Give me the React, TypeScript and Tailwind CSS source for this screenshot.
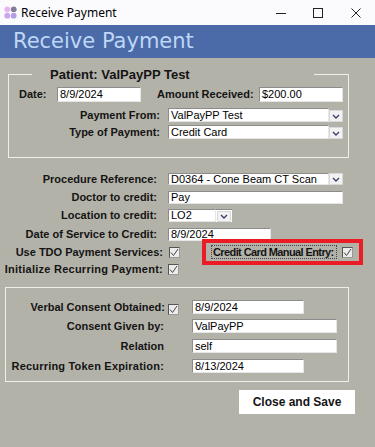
import React from "react";

const FONT = { fontFamily: '"Liberation Sans", Arial, sans-serif' };

function TextBox({ w, h = 14, value }: { w: number; h?: number; value: string }) {
  return (
    <div
      className="bg-white border-t border-l border-[#8c8c8c] border-b border-r border-b-[#e6e6e6] border-r-[#e6e6e6] flex items-center pl-[2px] text-[11px] text-black leading-none overflow-hidden whitespace-nowrap"
      style={{ width: w, height: h }}
    >
      {value}
    </div>
  );
}

function Chevron() {
  return (
    <svg width="8" height="5" viewBox="0 0 8 5">
      <path d="M1 1 L4 4 L7 1" fill="none" stroke="#3f3f6f" strokeWidth="1.4" />
    </svg>
  );
}

function DropBtn({ w = 14, h = 12 }: { w?: number; h?: number }) {
  return (
    <div
      className="bg-[#f2f2f2] border border-[#d8d8d8] flex items-end justify-center pb-[2px]"
      style={{ width: w, height: h }}
    >
      <Chevron />
    </div>
  );
}

function Check() {
  return (
    <div className="w-[11px] h-[11px] bg-[#ececec] border border-[#555] border-b-[#9a9a9a] border-r-[#9a9a9a] flex items-center justify-center">
      <svg width="9" height="9" viewBox="0 0 9 9">
        <path d="M1 4.5 L3.5 7.5 L8 1" fill="none" stroke="#444" strokeWidth="1" />
      </svg>
    </div>
  );
}

function Label({
  w,
  children,
  right = true,
  extra = "",
}: {
  w: number;
  children: React.ReactNode;
  right?: boolean;
  extra?: string;
}) {
  return (
    <div
      className={
        "text-[11px] font-bold text-[#141414] leading-none whitespace-nowrap " +
        (right ? "text-right " : "text-left ") +
        extra
      }
      style={{ width: w }}
    >
      {children}
    </div>
  );
}

export default function App() {
  return (
    <div className="w-[375px] h-[447px] bg-[#b3b2a9] flex flex-col overflow-hidden" style={FONT}>
      {/* Title bar */}
      <div className="h-[25px] bg-[#fbfbfe] flex items-center shrink-0">
        <svg className="ml-[4px]" width="13" height="13" viewBox="0 0 13 13">
          <circle cx="3.3" cy="3.3" r="2.9" fill="#e6b4f0" />
          <circle cx="9.7" cy="3.3" r="2.9" fill="#857c98" />
          <circle cx="3.3" cy="9.7" r="2.9" fill="#c7a6f4" />
          <circle cx="9.7" cy="9.7" r="2.9" fill="#b49ee6" />
        </svg>
        <span className="ml-[4px] text-[12px] text-black" style={{ fontFamily: '"Noto Sans", "Open Sans", sans-serif' }}>
          Receive Payment
        </span>
        <div className="ml-auto flex items-center">
          <svg width="12" height="12" viewBox="0 0 12 12" className="mr-[25px]">
            <path d="M1 6.5 H11" stroke="#222" strokeWidth="1" />
          </svg>
          <svg width="12" height="12" viewBox="0 0 12 12" className="mr-[26px]">
            <rect x="1.5" y="1.5" width="9" height="9" fill="none" stroke="#222" strokeWidth="1" />
          </svg>
          <svg width="12" height="12" viewBox="0 0 12 12" className="mr-[13px]">
            <path d="M1.5 1.5 L10.5 10.5 M10.5 1.5 L1.5 10.5" stroke="#222" strokeWidth="1" />
          </svg>
        </div>
      </div>

      {/* Blue header */}
      <div className="h-[33px] bg-[#4a6aa8] flex items-center pl-[13px] shrink-0">
        <span className="text-[21px] text-[#bfd7f6] leading-none" style={{ fontFamily: '"DejaVu Sans", Verdana, sans-serif' }}>
          Receive Payment
        </span>
      </div>

      {/* Group 1 */}
      <div className="mt-[16px] ml-[8px] w-[341px] h-[84px] relative border border-[#efefea] shrink-0">
        <div className="absolute left-[23px] top-[-8px] w-[282px] h-[15px] bg-[#b3b2a9] pl-[18px] flex items-center text-[13px] font-bold text-[#141414] leading-none">
          Patient:&nbsp;ValPayPP Test
        </div>
        <div className="pt-[12px] flex flex-col">
          <div className="flex items-center h-[15px]">
            <div className="ml-[10px]">
              <Label w={38} right={false}>Date:</Label>
            </div>
            <TextBox w={84} h={15} value="8/9/2024" />
            <div className="ml-[16px]">
              <Label w={102} right={false}>Amount Received:</Label>
            </div>
            <TextBox w={84} h={15} value="$200.00" />
          </div>
          <div className="flex items-center h-[14px] mt-[6px]">
            <Label w={151}>Payment From:</Label>
            <div className="ml-[8px] flex items-end">
              <TextBox w={161} h={14} value="ValPayPP Test" />
              <DropBtn />
            </div>
          </div>
          <div className="flex items-center h-[14px] mt-[3px]">
            <Label w={151}>Type of Payment:</Label>
            <div className="ml-[8px] flex items-end">
              <TextBox w={161} h={14} value="Credit Card" />
              <DropBtn />
            </div>
          </div>
        </div>
      </div>

      {/* Credit section */}
      <div className="mt-[15px] flex flex-col shrink-0">
        <div className="flex items-center h-[12px]">
          <Label w={157}>Procedure Reference:</Label>
          <div className="ml-[11px] flex items-start">
            <TextBox w={161} h={12} value="D0364 - Cone Beam CT Scan" />
            <DropBtn h={12} />
          </div>
        </div>
        <div className="flex items-center h-[13px] mt-[6px]">
          <Label w={157}>Doctor to credit:</Label>
          <div className="ml-[11px] relative">
            <TextBox w={175} h={13} value="Pay" />
          </div>
          <div className="-ml-[14px]">
            <DropBtn h={11} w={13} />
          </div>
        </div>
        <div className="flex items-center h-[13px] mt-[5px]">
          <Label w={157}>Location to credit:</Label>
          <div className="ml-[11px] flex items-center">
            <TextBox w={48} h={13} value="LO2" />
            <div className="bg-white h-[13px] w-[16px] flex items-center justify-center border-t border-[#8c8c8c]">
              <DropBtn h={11} w={14} />
            </div>
          </div>
        </div>
        <div className="flex items-center h-[13px] mt-[6px]">
          <Label w={157}>Date of Service to Credit:</Label>
          <div className="ml-[11px]">
            <TextBox w={103} h={13} value="8/9/2024" />
          </div>
        </div>

        <div className="flex mt-[-2px]">
          <div className="flex flex-col w-[180px]">
            <div className="flex items-center h-[11px] mt-[8px]">
              <Label w={163}>Use TDO Payment Services:</Label>
              <div className="ml-[6px]">
                <Check />
              </div>
            </div>
            <div className="flex items-center h-[11px] mt-[6px]">
              <Label w={163} extra="tracking-[0.25px]">Initialize Recurring Payment:</Label>
              <div className="ml-[5px]">
                <Check />
              </div>
            </div>
          </div>
          <div className="ml-[22px] w-[161px] h-[26px] border-[4px] border-[#ea1d26] flex items-center pl-[5px]">
            <div className="h-[14px] w-[126px] border border-dotted border-[#444] flex items-center pl-[1px]">
              <Label w={122} right={false} extra="tracking-[-0.6px]">Credit Card Manual Entry:</Label>
            </div>
            <div className="ml-[5px]">
              <Check />
            </div>
          </div>
        </div>
      </div>

      {/* Group 2 */}
      <div className="mt-[12px] ml-[5px] w-[344px] h-[95px] border border-[#efefea] shrink-0">
        <div className="pt-[12px] flex flex-col">
          <div className="flex items-center h-[14px]">
            <Label w={159}>Verbal Consent Obtained:</Label>
            <div className="ml-[3px] mt-[4px]">
              <Check />
            </div>
            <div className="ml-[13px]">
              <TextBox w={112} h={14} value="8/9/2024" />
            </div>
          </div>
          <div className="flex items-center h-[14px] mt-[5px]">
            <Label w={158}>Consent Given by:</Label>
            <div className="ml-[28px]">
              <TextBox w={145} h={14} value="ValPayPP" />
            </div>
          </div>
          <div className="flex items-center h-[14px] mt-[6px]">
            <Label w={158}>Relation</Label>
            <div className="ml-[28px]">
              <TextBox w={145} h={14} value="self" />
            </div>
          </div>
          <div className="flex items-center h-[14px] mt-[6px]">
            <Label w={158} extra="tracking-[0.2px]">Recurring Token Expiration:</Label>
            <div className="ml-[28px]">
              <TextBox w={112} h={14} value="8/13/2024" />
            </div>
          </div>
        </div>
      </div>

      {/* Button */}
      <div className="mt-[8px] ml-[239px] w-[116px] h-[24px] bg-white flex items-center justify-center text-[12px] font-bold text-[#141414] shrink-0">
        Close and Save
      </div>
    </div>
  );
}
